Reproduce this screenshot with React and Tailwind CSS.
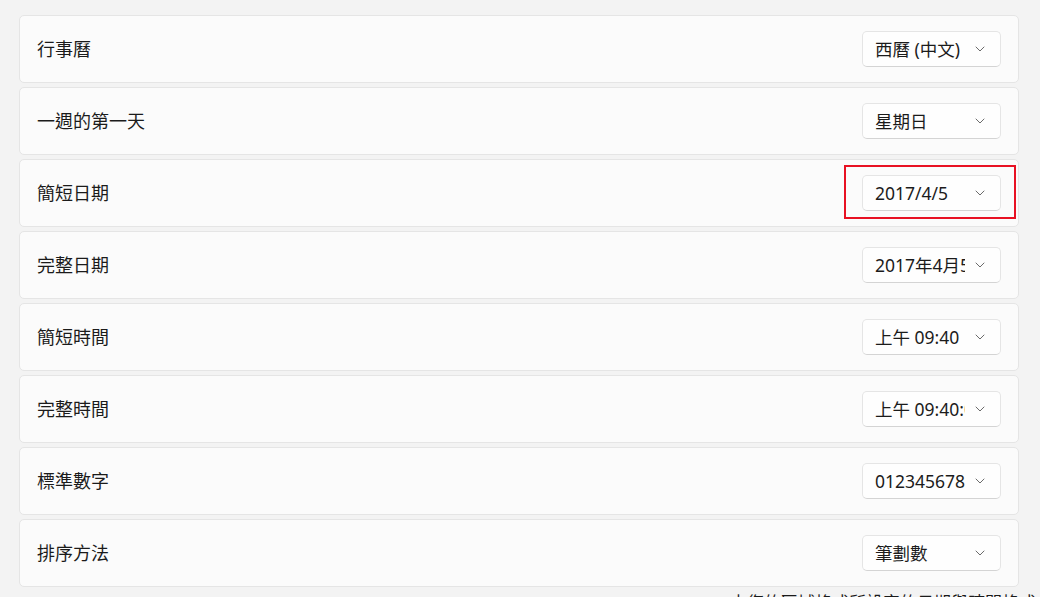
import React from 'react';

const rows = [
  { label: '行事曆', value: '西曆 (中文)' },
  { label: '一週的第一天', value: '星期日' },
  { label: '簡短日期', value: '2017/4/5', highlight: true },
  { label: '完整日期', value: '2017年4月5日' },
  { label: '簡短時間', value: '上午 09:40' },
  { label: '完整時間', value: '上午 09:40:07' },
  { label: '標準數字', value: '0123456789' },
  { label: '排序方法', value: '筆劃數' },
];

const font = { fontFamily: '"Segoe UI", "Noto Sans", "Noto Sans CJK TC", sans-serif' };

const Chevron = () => (
  <svg width="10" height="6" viewBox="0 0 10 6" fill="none" className="shrink-0">
    <path d="M1 1l4 4 4-4" stroke="#6b6b6b" strokeWidth="1" strokeLinecap="round" strokeLinejoin="round" />
  </svg>
);

// value text is clipped by the box, as in the real settings page
const Dropdown = ({ value, highlight }) => (
  <div className="relative">
    <div className="flex h-[36px] w-[139px] items-center rounded-[5px] border border-[#e5e5e5] border-b-[#d4d4d4] bg-[#fefefe] pl-[12px] pr-[15px]">
      <span className="flex-1 overflow-hidden whitespace-nowrap text-[17.5px] text-[#1b1b1b]">{value}</span>
      <span className="ml-[10px]"><Chevron /></span>
    </div>
    {highlight && (
      <div className="pointer-events-none absolute -left-[18px] -right-[15px] -top-[10px] -bottom-[8px] border-2 border-[#e81123]" />
    )}
  </div>
);

const App = () => {
  return (
    <div className="min-h-[597px] overflow-hidden bg-[#f3f3f3] pl-[19px] pt-[15px]" style={font}>
      <div className="flex w-[1000px] flex-col gap-[4px]">
        {rows.map((row) => (
          <div
            key={row.label}
            className="flex h-[68px] items-center justify-between rounded-[5px] border border-[#e5e5e5] bg-[#fbfbfb] pl-[17px] pr-[17px]"
          >
            <span className="text-[18px] text-[#1b1b1b]">{row.label}</span>
            <Dropdown value={row.value} highlight={row.highlight} />
          </div>
        ))}
      </div>
      <p className="ml-[711px] mt-[3px] whitespace-nowrap text-[17px] text-[#1b1b1b]">
        由您的區域格式所設定的日期與時間格式
      </p>
    </div>
  );
};

export default App;
